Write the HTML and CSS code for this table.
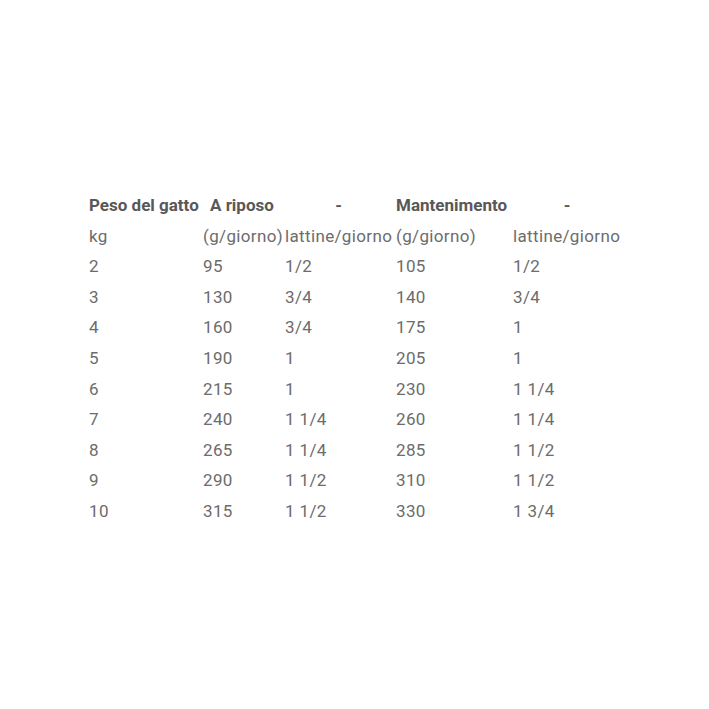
FILE: index.html
```html
<!DOCTYPE html>
<html lang="it">
<head>
<meta charset="utf-8">
<title>Razioni giornaliere</title>
<link rel="stylesheet" href="styles.css">
</head>
<body>
<div class="page">
  <div class="table">
    <div class="row head">
      <div class="c c1">Peso del gatto</div>
      <div class="c c2 ar">A riposo</div>
      <div class="c c3 dash">-</div>
      <div class="c c4">Mantenimento</div>
      <div class="c c5 dash">-</div>
    </div>
    <div class="row">
      <div class="c c1">kg</div>
      <div class="c c2">(g/giorno)</div>
      <div class="c c3">lattine/giorno</div>
      <div class="c c4">(g/giorno)</div>
      <div class="c c5">lattine/giorno</div>
    </div>
    <div class="row"><div class="c c1">2</div><div class="c c2">95</div><div class="c c3">1/2</div><div class="c c4">105</div><div class="c c5">1/2</div></div>
    <div class="row"><div class="c c1">3</div><div class="c c2">130</div><div class="c c3">3/4</div><div class="c c4">140</div><div class="c c5">3/4</div></div>
    <div class="row"><div class="c c1">4</div><div class="c c2">160</div><div class="c c3">3/4</div><div class="c c4">175</div><div class="c c5">1</div></div>
    <div class="row"><div class="c c1">5</div><div class="c c2">190</div><div class="c c3">1</div><div class="c c4">205</div><div class="c c5">1</div></div>
    <div class="row"><div class="c c1">6</div><div class="c c2">215</div><div class="c c3">1</div><div class="c c4">230</div><div class="c c5">1 1/4</div></div>
    <div class="row"><div class="c c1">7</div><div class="c c2">240</div><div class="c c3">1 1/4</div><div class="c c4">260</div><div class="c c5">1 1/4</div></div>
    <div class="row"><div class="c c1">8</div><div class="c c2">265</div><div class="c c3">1 1/4</div><div class="c c4">285</div><div class="c c5">1 1/2</div></div>
    <div class="row"><div class="c c1">9</div><div class="c c2">290</div><div class="c c3">1 1/2</div><div class="c c4">310</div><div class="c c5">1 1/2</div></div>
    <div class="row"><div class="c c1">10</div><div class="c c2">315</div><div class="c c3">1 1/2</div><div class="c c4">330</div><div class="c c5">1 3/4</div></div>
  </div>
</div>
</body>
</html>
```
FILE: styles.css
```css
html, body {
  margin: 0;
  padding: 0;
  background: #ffffff;
}
.page {
  width: 709px;
  height: 709px;
  padding: 190px 0 0 89px;
  box-sizing: border-box;
  font-family: Roboto, "Liberation Sans", sans-serif;
  font-size: 17px;
  color: #6c6c6c;
}
.table {
  display: flex;
  flex-direction: column;
}
.row {
  display: grid;
  grid-template-columns: 114px 82px 111px 117px 110px;
  height: 30.6px;
  line-height: 30px;
  white-space: nowrap;
  letter-spacing: 0.35px;
}
.head {
  font-weight: bold;
  color: #585858;
  letter-spacing: 0;
}
.head .ar {
  padding-left: 7px;
}
.dash {
  text-align: center;
  padding-right: 4px;
}
.c5.dash {
  padding-right: 2px;
}
```
